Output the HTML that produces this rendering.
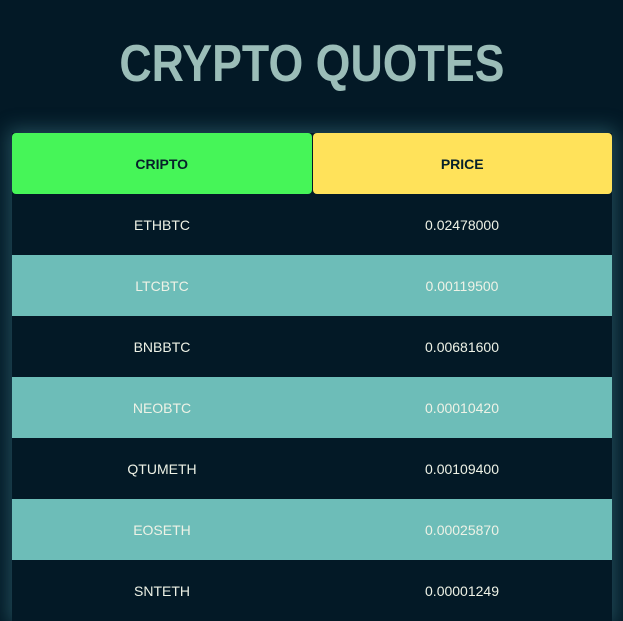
<!DOCTYPE html>
<html><head><style>
body{margin:0;width:623px;height:615px;background:#031926;overflow:hidden;font-family:"Liberation Sans",sans-serif;}
h1{position:absolute;left:0;top:36px;width:623px;margin:0;text-align:center;font-size:52px;line-height:56px;font-weight:bold;color:#9bbdb8;}
h1 span{display:inline-block;transform:scaleX(0.86);transform-origin:center;}
.t{position:absolute;left:12px;top:133px;width:600px;box-shadow:0 0 18px 4px rgba(90,170,180,0.35);}
.row{display:flex;height:61px;}
.row div{flex:1;display:flex;align-items:center;justify-content:center;font-size:14px;color:#eef2e6;}
.h div{font-weight:bold;color:#06202a;border-radius:4px;}
.h .a{background:#46f558;margin-right:1px;}
.h .b{background:#ffe25a;}
.d{background:#031926;}
.l{background:#6dbdb8;}
</style></head><body>
<h1><span>CRYPTO QUOTES</span></h1>
<div class="t">
<div class="row h"><div class="a">CRIPTO</div><div class="b">PRICE</div></div>
<div class="row d"><div>ETHBTC</div><div>0.02478000</div></div>
<div class="row l"><div>LTCBTC</div><div>0.00119500</div></div>
<div class="row d"><div>BNBBTC</div><div>0.00681600</div></div>
<div class="row l"><div>NEOBTC</div><div>0.00010420</div></div>
<div class="row d"><div>QTUMETH</div><div>0.00109400</div></div>
<div class="row l"><div>EOSETH</div><div>0.00025870</div></div>
<div class="row d"><div>SNTETH</div><div>0.00001249</div></div>
</div>
</body></html>
